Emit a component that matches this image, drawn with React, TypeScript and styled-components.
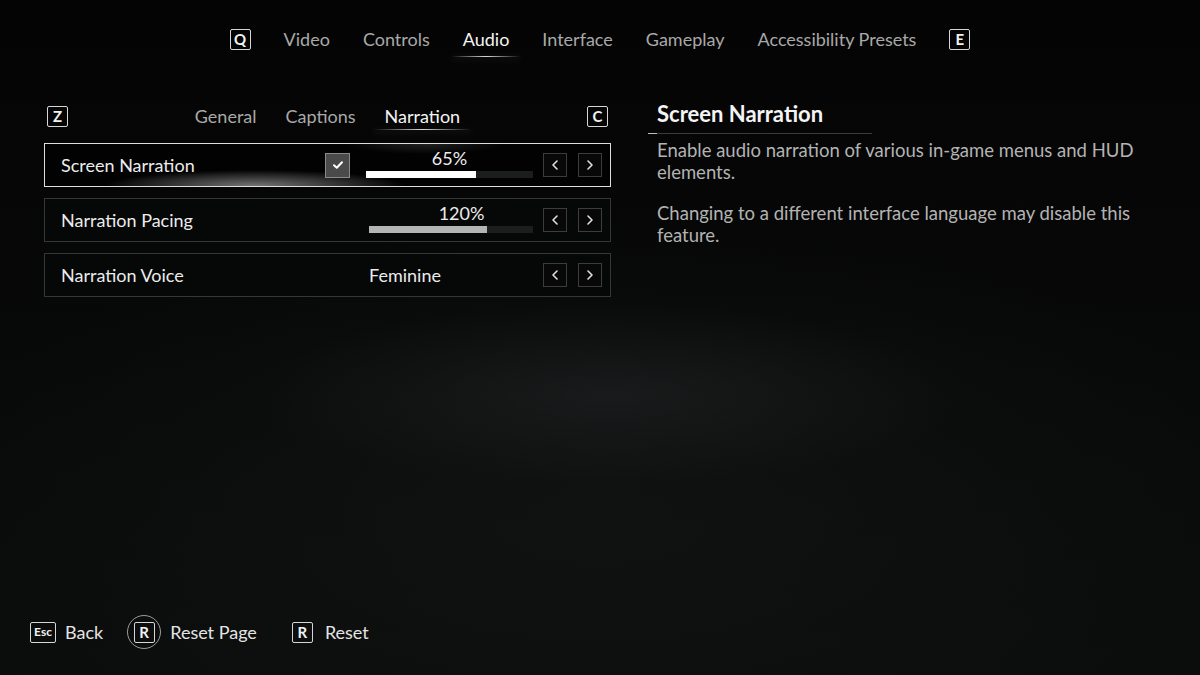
import styled, { createGlobalStyle } from 'styled-components'

const GlobalStyle = createGlobalStyle`
  html, body {
    margin: 0;
    padding: 0;
    background: #070808;
  }
  * {
    box-sizing: border-box;
  }
`

const Screen = styled.div`
  width: 1200px;
  height: 675px;
  display: flex;
  flex-direction: column;
  overflow: hidden;
  font-family: Lato, 'Noto Sans', sans-serif;
  color: #e8e8e8;
  background:
    radial-gradient(ellipse 360px 90px at 610px 395px, rgba(34, 38, 38, 0.55), transparent),
    radial-gradient(ellipse 700px 300px at 600px 520px, rgba(18, 20, 20, 0.8), transparent),
    linear-gradient(#040404, #0b0c0c);
`

const TopNav = styled.nav`
  display: flex;
  justify-content: center;
  align-items: center;
  gap: 33px;
  padding-top: 28px;
  height: 50px;
`

const Key = styled.span<{ $w?: number }>`
  display: inline-flex;
  align-items: center;
  justify-content: center;
  width: ${(p) => p.$w ?? 21}px;
  height: 21px;
  border: 1.5px solid #d6d6d6;
  border-radius: 2px;
  font-size: ${(p) => (p.$w ? 12 : 15)}px;
  font-weight: 700;
  color: #f2f2f2;
  line-height: 1;
`

const Tab = styled.span<{ $active?: boolean; $line?: number }>`
  position: relative;
  font-size: 18px;
  color: ${(p) => (p.$active ? '#f4f4f4' : '#a9a9a9')};
  line-height: 22px;

  ${(p) =>
    p.$active &&
    `
    &::after {
      content: '';
      position: absolute;
      left: -12px;
      right: -12px;
      bottom: ${p.$line ?? -7}px;
      height: 1px;
      background: linear-gradient(90deg, transparent, #5a5a5a 20%, #d8d8d8 50%, #5a5a5a 80%, transparent);
      box-shadow: 0 2px 6px rgba(255, 255, 255, 0.22);
    }
  `}
`

const Main = styled.main`
  flex: 1;
  display: flex;
  gap: 37px;
  padding: 55px 0 0 44px;
`

const LeftCol = styled.section`
  width: 567px;
  display: flex;
  flex-direction: column;
  gap: 11px;
`

const SubNav = styled.div`
  display: flex;
  justify-content: space-between;
  align-items: center;
  padding: 0 3px;
  height: 22px;
  margin-bottom: 5px;
`

const SubTabs = styled.div`
  display: flex;
  gap: 29px;
`

const Row = styled.div<{ $selected?: boolean }>`
  height: 44px;
  display: flex;
  align-items: center;
  padding: 0 8px 0 16px;
  border: ${(p) => (p.$selected ? '1.5px solid #dedede' : '1px solid #353636')};
  background: ${(p) =>
    p.$selected
      ? `radial-gradient(ellipse 150px 16px at 210px 100%, rgba(255,255,255,0.45), transparent),
         radial-gradient(ellipse 80px 10px at 380px 0%, rgba(255,255,255,0.12), transparent),
         #020202`
      : '#060707'};
`

const Label = styled.span`
  flex: 1;
  font-size: 18px;
  color: #ececec;
`

const CheckBox = styled.span`
  width: 25px;
  height: 25px;
  margin-right: 16px;
  display: flex;
  align-items: center;
  justify-content: center;
  background: #4a4a4a;
  border: 1px solid #8a8a8a;
`

const Control = styled.div`
  width: 167px;
  height: 42px;
  position: relative;
`

const Value = styled.span<{ $shift?: number }>`
  position: absolute;
  top: 3px;
  left: ${(p) => p.$shift ?? 0}px;
  right: 0;
  text-align: center;
  font-size: 18px;
  line-height: 22px;
  color: #ececec;
`

const Track = styled.div`
  position: absolute;
  left: 0;
  right: 0;
  top: 27px;
  height: 7px;
  background: #1c1d1d;
`

const Fill = styled.div<{ $bright?: boolean }>`
  height: 100%;
  background: ${(p) => (p.$bright ? '#ffffff' : '#b4b4b4')};
`

const Choice = styled.span`
  position: absolute;
  left: 3px;
  top: 10px;
  font-size: 18px;
  color: #ececec;
`

const Arrows = styled.div`
  display: flex;
  gap: 11px;
  margin-left: 10px;
`

const ArrowBtn = styled.span`
  width: 24px;
  height: 24px;
  display: flex;
  align-items: center;
  justify-content: center;
  border: 1px solid #3b3c3c;
  background: #080808;
`

const RightCol = styled.section`
  width: 490px;
  margin-top: -2px;
`

const InfoTitle = styled.h2`
  margin: 0;
  padding: 0 0 8px 9px;
  font-size: 22px;
  font-weight: 700;
  color: #f4f4f4;
  width: 224px;
  border-bottom: 1px solid #3a3a3a;
  position: relative;
  line-height: 22px;

  &::after {
    content: '';
    position: absolute;
    left: 0;
    bottom: -1px;
    width: 9px;
    height: 1px;
    background: #bdbdbd;
  }
`

const InfoText = styled.p<{ $gap?: number }>`
  margin: ${(p) => p.$gap ?? 6}px 0 0 9px;
  width: 480px;
  font-size: 18.5px;
  line-height: 21.5px;
  color: #b3b3b3;
`

const Footer = styled.footer`
  display: flex;
  align-items: center;
  padding: 0 0 26px 30px;
  height: 60px;
`

const Hint = styled.div<{ $gap?: number; $after?: number }>`
  display: flex;
  align-items: center;
  gap: ${(p) => p.$gap ?? 9}px;
  margin-right: ${(p) => p.$after ?? 0}px;
  font-size: 18px;
  color: #e4e4e4;
`

const Ring = styled.span`
  width: 34px;
  height: 34px;
  border-radius: 50%;
  border: 1.5px solid #9a9a9a;
  display: flex;
  align-items: center;
  justify-content: center;
`

const Check = () => (
  <svg width="12" height="10" viewBox="0 0 12 10">
    <path d="M2 5.2 L4.8 7.8 L10 2.2" fill="none" stroke="#fff" strokeWidth="2" strokeLinecap="round" strokeLinejoin="round" />
  </svg>
)

const Chevron = ({ right }: { right?: boolean }) => (
  <svg width="8" height="12" viewBox="0 0 8 12">
    <path
      d={right ? 'M2 2 L6 6 L2 10' : 'M6 2 L2 6 L6 10'}
      fill="none"
      stroke="#e0e0e0"
      strokeWidth="1.6"
      strokeLinecap="round"
      strokeLinejoin="round"
    />
  </svg>
)

const ArrowPair = () => (
  <Arrows>
    <ArrowBtn>
      <Chevron />
    </ArrowBtn>
    <ArrowBtn>
      <Chevron right />
    </ArrowBtn>
  </Arrows>
)

const topTabs = ['Video', 'Controls', 'Audio', 'Interface', 'Gameplay', 'Accessibility Presets']
const subTabs = ['General', 'Captions', 'Narration']

const App = () => {
  return (
    <Screen>
      <GlobalStyle />
      <TopNav>
        <Key>Q</Key>
        {topTabs.map((t) => (
          <Tab key={t} $active={t === 'Audio'}>
            {t}
          </Tab>
        ))}
        <Key>E</Key>
      </TopNav>

      <Main>
        <LeftCol>
          <SubNav>
            <Key>Z</Key>
            <SubTabs>
              {subTabs.map((t) => (
                <Tab key={t} $active={t === 'Narration'} $line={-3}>
                  {t}
                </Tab>
              ))}
            </SubTabs>
            <Key>C</Key>
          </SubNav>

          <Row $selected>
            <Label>Screen Narration</Label>
            <CheckBox>
              <Check />
            </CheckBox>
            <Control>
              <Value>65%</Value>
              <Track>
                <Fill $bright style={{ width: '66%' }} />
              </Track>
            </Control>
            <ArrowPair />
          </Row>

          <Row>
            <Label>Narration Pacing</Label>
            <Control>
              <Value $shift={24}>120%</Value>
              <Track style={{ left: 3 }}>
                <Fill style={{ width: '72%' }} />
              </Track>
            </Control>
            <ArrowPair />
          </Row>

          <Row>
            <Label>Narration Voice</Label>
            <Control>
              <Choice>Feminine</Choice>
            </Control>
            <ArrowPair />
          </Row>
        </LeftCol>

        <RightCol>
          <InfoTitle>Screen Narration</InfoTitle>
          <InfoText>Enable audio narration of various in-game menus and HUD elements.</InfoText>
          <InfoText $gap={20}>
            Changing to a different interface language may disable this feature.
          </InfoText>
        </RightCol>
      </Main>

      <Footer>
        <Hint $after={24}>
          <Key $w={26}>Esc</Key>
          Back
        </Hint>
        <Hint $after={35}>
          <Ring>
            <Key>R</Key>
          </Ring>
          Reset Page
        </Hint>
        <Hint $gap={12}>
          <Key>R</Key>
          Reset
        </Hint>
      </Footer>
    </Screen>
  )
}

export default App
